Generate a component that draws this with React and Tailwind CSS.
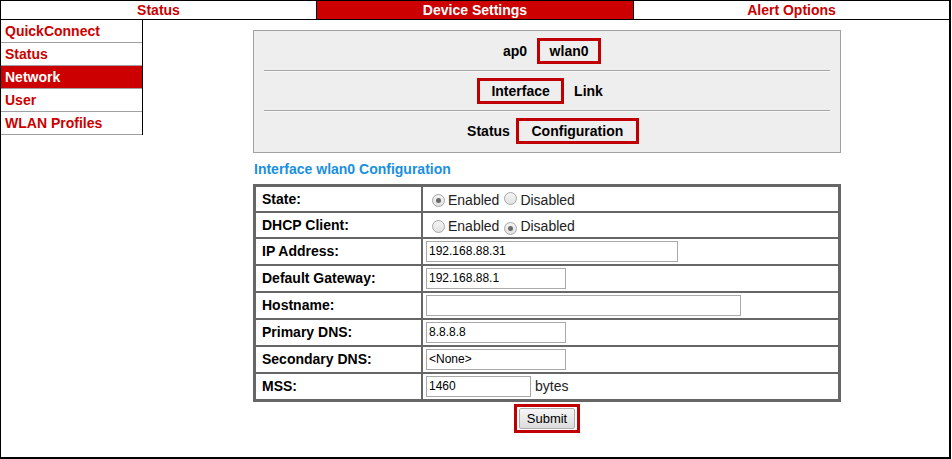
import React from "react";

function Radio({ checked }) {
  return (
    <span className="inline-flex items-center justify-center w-[13px] h-[13px] rounded-full border border-[#a6a6a6] bg-gradient-to-b from-[#f4f4f4] to-[#e2e2e2]">
      {checked ? <span className="w-[5px] h-[5px] rounded-full bg-[#6a6a6a]" /> : null}
    </span>
  );
}

function Field({ value, w }) {
  return (
    <div
      className={`h-[21px] border border-[#a9a9a9] bg-white px-[2px] text-[12px] leading-[19px] text-black ${w}`}
    >
      {value}
    </div>
  );
}

function Row({ label, h, first, children, padLeft }) {
  return (
    <div className={`flex ${h} ${first ? "" : "border-t-2 border-[#666666]"}`}>
      <div className="w-[167px] shrink-0 border-r-2 border-[#666666] pl-[6px] flex items-center font-bold text-[14px] text-black">
        {label}
      </div>
      <div className={`flex-1 flex items-center ${padLeft}`}>{children}</div>
    </div>
  );
}

function RadioPair({ enabled }) {
  return (
    <div className="flex items-center text-[14px] text-[#222222] mt-[2px]">
      <Radio checked={enabled} />
      <span className="ml-[3px]">Enabled</span>
      <span className="ml-[5px]">
        <Radio checked={!enabled} />
      </span>
      <span className="ml-[3px]">Disabled</span>
    </div>
  );
}

export default function App() {
  const menu = ["QuickConnect", "Status", "Network", "User", "WLAN Profiles"];
  return (
    <div className="w-[952px] h-[459px] bg-white overflow-hidden font-['Liberation_Sans',Arial,sans-serif]">
      <div className="w-[951px] h-[459px] flex flex-col border-l border-r-2 border-b-2 border-black">
        {/* top tabs */}
        <div className="flex h-[20px] shrink-0 border-t border-b border-black text-[14px] font-bold leading-[18px]">
          <div className="w-[316px] border-r border-black text-center text-[#cc0000]">Status</div>
          <div className="w-[317px] border-r border-black bg-[#cc0000] text-center text-white">Device Settings</div>
          <div className="flex-1 text-center text-[#cc0000]">Alert Options</div>
        </div>
        {/* body */}
        <div className="flex flex-1">
          <div className="w-[142px] self-start border-r border-black shrink-0">
            {menu.map((m) => (
              <div
                key={m}
                className={`h-[23px] border-b border-[#a0a0a0] pl-[4px] text-[14px] font-bold leading-[23px] ${
                  m === "Network" ? "bg-[#cc0000] text-white" : "text-[#cc0000]"
                }`}
              >
                {m}
              </div>
            ))}
          </div>
          <div className="flex-1 flex flex-col items-center pl-[2px]">
            <div className="w-[588px] mt-[10px] flex flex-col">
              {/* nav box */}
              <div className="border border-[#a0a0a0] bg-[#eeeeee] px-[10px] pt-[7px] pb-[8px] text-[14px] font-bold text-black">
                <div className="flex items-center justify-center h-[26px] pl-[10px]">
                  <span>ap0</span>
                  <span className="ml-[10px] w-[64px] h-[26px] border-[3px] border-[#c00000] flex items-center justify-center">
                    wlan0
                  </span>
                </div>
                <div className="mt-[6px] mb-[6px] border-t border-[#a5a5a5] border-b border-b-[#f8f8f8]" />
                <div className="flex items-center justify-center h-[26px] pr-[14px]">
                  <span className="w-[87px] h-[26px] border-[3px] border-[#c00000] flex items-center justify-center">
                    Interface
                  </span>
                  <span className="ml-[10px]">Link</span>
                </div>
                <div className="mt-[6px] mb-[6px] border-t border-[#a5a5a5] border-b border-b-[#f8f8f8]" />
                <div className="flex items-center justify-center h-[26px] pl-[12px]">
                  <span>Status</span>
                  <span className="ml-[6px] w-[123px] h-[26px] border-[3px] border-[#c00000] flex items-center justify-center">
                    Configuration
                  </span>
                </div>
              </div>
              {/* heading */}
              <div className="mt-[7px] h-[18px] leading-[18px] pl-[1px] text-[14px] font-bold text-[#1a8fe0]">
                Interface wlan0 Configuration
              </div>
              {/* table */}
              <div className="mt-[6px] border-[3px] border-[#666666]">
                <Row label="State:" h="h-[24px]" first padLeft="pl-[9px]">
                  <RadioPair enabled />
                </Row>
                <Row label="DHCP Client:" h="h-[26px]" padLeft="pl-[9px]">
                  <RadioPair enabled={false} />
                </Row>
                <Row label="IP Address:" h="h-[27px]" padLeft="pl-[3px]">
                  <Field value="192.168.88.31" w="w-[252px]" />
                </Row>
                <Row label="Default Gateway:" h="h-[27px]" padLeft="pl-[3px]">
                  <Field value="192.168.88.1" w="w-[140px]" />
                </Row>
                <Row label="Hostname:" h="h-[27px]" padLeft="pl-[3px]">
                  <Field value="" w="w-[315px]" />
                </Row>
                <Row label="Primary DNS:" h="h-[27px]" padLeft="pl-[3px]">
                  <Field value="8.8.8.8" w="w-[140px]" />
                </Row>
                <Row label="Secondary DNS:" h="h-[27px]" padLeft="pl-[3px]">
                  <Field value="<None>" w="w-[140px]" />
                </Row>
                <Row label="MSS:" h="h-[27px]" padLeft="pl-[3px]">
                  <Field value="1460" w="w-[105px]" />
                  <span className="ml-[4px] text-[14px] text-[#222222]">bytes</span>
                </Row>
              </div>
              {/* submit */}
              <div className="flex justify-center mt-[2px]">
                <div className="border-[3px] border-[#c00000] px-[2px] py-[1px] bg-white">
                  <div className="w-[56px] h-[21px] border border-[#adadad] rounded-[2px] bg-gradient-to-b from-[#f7f7f7] to-[#dcdcdc] text-[13px] leading-[19px] text-center text-black">
                    Submit
                  </div>
                </div>
              </div>
            </div>
          </div>
        </div>
      </div>
    </div>
  );
}
